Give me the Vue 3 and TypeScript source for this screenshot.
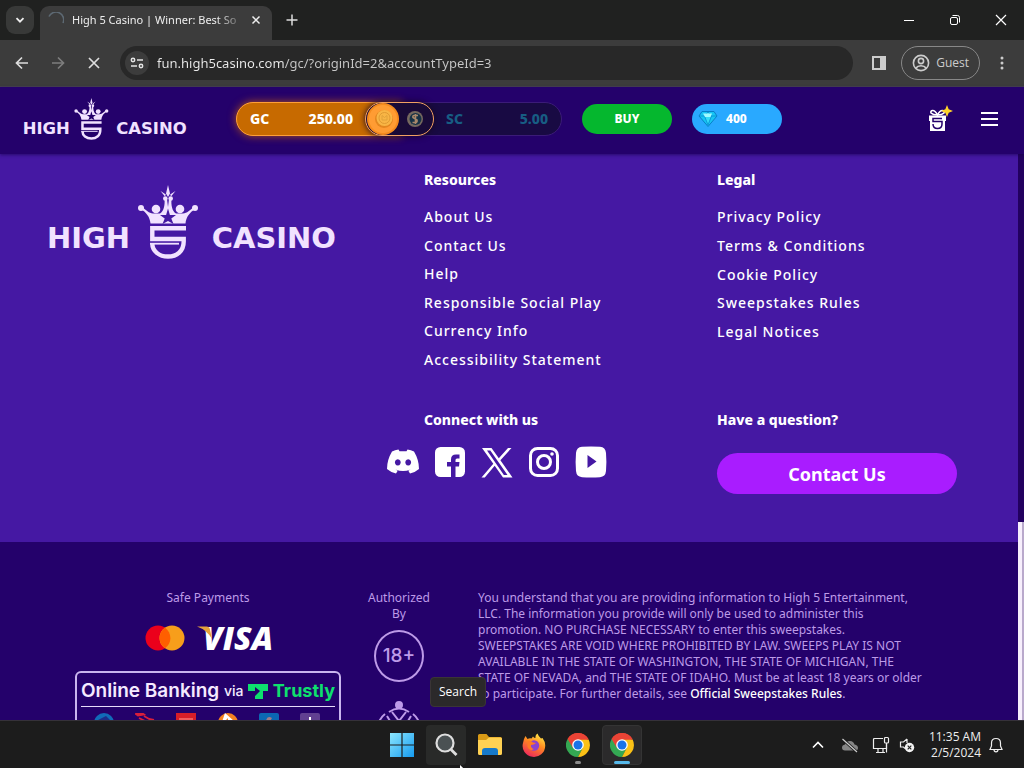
<script setup lang="ts">
import { ref } from 'vue'

interface FooterLink {
  label: string
  href: string
}

const resources: FooterLink[] = [
  { label: 'About Us', href: '#about' },
  { label: 'Contact Us', href: '#contact' },
  { label: 'Help', href: '#help' },
  { label: 'Responsible Social Play', href: '#responsible' },
  { label: 'Currency Info', href: '#currency' },
  { label: 'Accessibility Statement', href: '#accessibility' },
]

const legal: FooterLink[] = [
  { label: 'Privacy Policy', href: '#privacy' },
  { label: 'Terms & Conditions', href: '#terms' },
  { label: 'Cookie Policy', href: '#cookies' },
  { label: 'Sweepstakes Rules', href: '#rules' },
  { label: 'Legal Notices', href: '#notices' },
]

const address = ref('fun.high5casino.com/gc/?originId=2&accountTypeId=3')
</script>

<template>
  <div class="screen">
    <svg class="defs" aria-hidden="true">
      <symbol id="chrome-logo" viewBox="0 0 24 24">
        <path d="M12 12L1.600 6A12 12 0 0 1 22.400 6z" fill="#ea4335" />
        <path d="M12 12L1.600 6A12 12 0 0 0 12 24L17.500 14z" fill="#34a853" />
        <path d="M12 6.500H22.600A12 12 0 0 1 12 24L17 14.500z" fill="#fbc116" />
        <path d="M1.600 6L7 15L12 6.500H22.600L22.400 6A12 12 0 0 0 1.600 6z" fill="#ea4335" />
        <circle cx="12" cy="12" r="5.800" fill="#fff" />
        <circle cx="12" cy="12" r="4.500" fill="#1a73e8" />
      </symbol>
    </svg>

    <div class="tabstrip">
      <button class="tab-search" aria-label="Search tabs">
        <svg width="10" height="10" viewBox="0 0 10 10"><path d="M1.500 3.200L5 6.700L8.500 3.200" fill="none" stroke="#eee" stroke-width="1.800" /></svg>
      </button>
      <div class="tab">
        <svg class="spinner" width="16" height="16" viewBox="0 0 16 16"><path d="M1 4.500A7.500 7.500 0 0 1 15 11" fill="none" stroke="#5d6973" stroke-width="1.600" /></svg>
        <span class="tab-title">High 5 Casino | Winner: Best So</span>
        <button class="plain" aria-label="Close tab">
          <svg width="10" height="10" viewBox="0 0 10 10"><path d="M1.500 1.500L8.500 8.500M8.500 1.500L1.500 8.500" stroke="#eee" stroke-width="1.500" /></svg>
        </button>
      </div>
      <button class="plain new-tab" aria-label="New tab">
        <svg width="12" height="12" viewBox="0 0 12 12"><path d="M6 .5V11.500M.5 6H11.500" stroke="#ddd" stroke-width="1.500" /></svg>
      </button>
      <div class="window-buttons">
        <button class="plain" aria-label="Minimize"><svg width="12" height="12" viewBox="0 0 12 12"><path d="M1 6.500H11" stroke="#fff" /></svg></button>
        <button class="plain" aria-label="Restore"><svg width="12" height="12" viewBox="0 0 12 12" fill="none" stroke="#fff"><rect x="1.500" y="3.500" width="7" height="7" rx="1.500" /><path d="M3.500 1.500H8.500Q10.500 1.500 10.500 3.500V8.500" /></svg></button>
        <button class="plain" aria-label="Close"><svg width="12" height="12" viewBox="0 0 12 12"><path d="M1 1L11 11M11 1L1 11" stroke="#fff" stroke-width="1.200" /></svg></button>
      </div>
    </div>

    <div class="toolbar">
      <button class="plain" aria-label="Back"><svg width="14" height="14" viewBox="0 0 14 14"><path d="M13 7H2M7 1.500L1.500 7L7 12.500" fill="none" stroke="#ddd" stroke-width="1.700" /></svg></button>
      <button class="plain" aria-label="Forward"><svg width="14" height="14" viewBox="0 0 14 14"><path d="M1 7H12M7 1.500L12.500 7L7 12.500" fill="none" stroke="#7d7d7d" stroke-width="1.700" /></svg></button>
      <button class="plain" aria-label="Stop loading"><svg width="12" height="12" viewBox="0 0 12 12"><path d="M1 1L11 11M11 1L1 11" stroke="#ddd" stroke-width="1.700" /></svg></button>
      <div class="omnibox">
        <button class="site-info" aria-label="Site information">
          <svg width="14" height="12" viewBox="0 0 14 12" fill="none" stroke="#e4e4e4" stroke-width="1.500"><circle cx="3" cy="3" r="1.700" /><path d="M7 3H13M1 9H7" /><circle cx="11" cy="9" r="1.700" /></svg>
        </button>
        <input v-model="address" class="address" type="text" aria-label="Address" spellcheck="false" />
      </div>
      <button class="plain side-panel" aria-label="Side panel">
        <svg width="16" height="16" viewBox="0 0 16 16"><path fill-rule="evenodd" d="M1 1H15V15H1zM3 3V13H9V3z" fill="#ccc" /></svg>
      </button>
      <button class="guest">
        <svg width="18" height="18" viewBox="0 0 18 18" fill="none" stroke="#ccc" stroke-width="1.600"><circle cx="9" cy="9" r="7.600" /><circle cx="9" cy="7" r="2.600" /><path d="M4 14C6 11 12 11 14 14" /></svg>
        <span>Guest</span>
      </button>
      <button class="plain" aria-label="Menu"><svg width="4" height="16" viewBox="0 0 4 16" fill="#ccc"><circle cx="2" cy="3" r="1.500" /><circle cx="2" cy="8" r="1.500" /><circle cx="2" cy="13" r="1.500" /></svg></button>
    </div>

    <main class="page">
      <header class="site-header">
        <a class="header-logo" href="#home" aria-label="High 5 Casino"><svg width="164" height="42" viewBox="0 0 288 74"><use href="#h5-logo" /></svg></a>
        <div class="balances">
          <div class="balance gold"><span>GC</span><span>250.00</span></div>
          <button class="coin-switch" aria-label="Switch currency">
            <svg width="34" height="32" viewBox="0 0 34 32">
              <circle cx="17" cy="16" r="16" fill="#f58b1e" />
              <circle cx="17" cy="16" r="14" fill="#ff9c33" />
              <circle cx="18" cy="16" r="9" fill="#e3861f" />
              <circle cx="18.500" cy="15" r="8" fill="#f8b545" />
              <circle cx="18.500" cy="15" r="5.500" fill="none" stroke="#df9a32" />
              <path d="M16 17V12.500L18.500 14.500L21 12.500V17z" fill="none" stroke="#e0a23a" />
            </svg>
            <svg width="18" height="18" viewBox="0 0 18 18">
              <circle cx="9" cy="9" r="8" fill="#76695f" /><circle cx="9.500" cy="9" r="6" fill="#173246" />
              <path d="M12 5.500H8Q6.500 5.500 7 7.500L11 10Q11.500 12.500 9.500 12.500H6.500M9.500 4V14" fill="none" stroke="#a9886b" stroke-width="1.600" />
            </svg>
          </button>
          <div class="balance sweep"><span>SC</span><span>5.00</span></div>
        </div>
        <button class="pill buy">BUY</button>
        <button class="pill gems">
          <svg width="20" height="18" viewBox="0 0 20 18"><path d="M4 1.500H16L19 6L10 16.500L1 6z" fill="#16c5f4" stroke="#087fc8" /><path d="M2 6H18M6.500 6L10 15L13.500 6L10 2z" fill="#35dcf8" stroke="#078bd0" stroke-width=".8" /><path d="M5 3.500H14L12.500 7H7z" fill="#a0fbff" /></svg>
          <span>400</span>
        </button>
        <div class="header-actions">
          <button class="plain" aria-label="Rewards">
            <svg width="26" height="28" viewBox="0 0 26 28">
              <path d="M2 10.500H19V16H18V26H3V16H2z" fill="#fff" />
              <path d="M10.500 10C7 3 3 5.500 4 8Q6 10 10.500 10Q15 10 17 8C18 5.500 14 3 10.500 10z" fill="none" stroke="#fff" stroke-width="1.600" />
              <path d="M15 13.500H6V16.500H15V19Q15 23.500 10.500 23.500T6 19" fill="none" stroke="#24016b" stroke-width="1.500" />
              <path d="M20 0L21.700 4.300L26 6L21.700 7.700L20 12L18.300 7.700L14 6L18.300 4.300z" fill="#ffd42a" />
            </svg>
          </button>
          <button class="plain" aria-label="Open menu"><svg width="18" height="16" viewBox="0 0 18 16"><path d="M0 2H17M0 8H17M0 14H17" stroke="#fff" stroke-width="2" /></svg></button>
        </div>
      </header>

      <div class="scroller">
        <footer class="site-footer">
          <section class="footer-top">
            <a class="footer-logo" href="#home" aria-label="High 5 Casino">
              <svg width="288" height="74" viewBox="0 0 288 74">
                <g id="h5-logo">
                  <text class="wordmark" x="-1" y="63">HIGH</text>
                  <text class="wordmark" x="288" y="63" text-anchor="end">CASINO</text>
                  <path d="M138 43.2H104.3V54H135.7V56.5C135.7 66 129 71.5 120 71.5S104.3 66 104.3 58.6" fill="none" stroke="currentColor" stroke-width="4.4" />
                  <path d="M102 57.800H131V59.600H102z" fill="currentColor" />
                  <path d="M102.5 38.5C102 32 98 27 92.5 24L94 21.800C98 25 101 28.500 105 28.500L112 28.500C116 26 117 20 116.500 14H119L120 22L121 14H123.500C123 20 124 26 128 28.500L135 28.500C139 28.500 142 25 146 21.800L147.500 24C142 27 138 32 137.500 38.500z" fill="currentColor" />
                  <g fill="currentColor">
                    <circle cx="93" cy="23" r="3" />
                    <circle cx="147" cy="23" r="3" />
                    <circle cx="108" cy="24" r="4.300" />
                    <circle cx="132" cy="24" r="4.300" />
                    <circle cx="117.300" cy="13.500" r="2.300" />
                    <circle cx="122.700" cy="13.500" r="2.300" />
                    <path d="M120 0L122 8.500L120 12L118 8.500zM112.500 6L117.800 9.500L117 11.500zM127.500 6L122.200 9.500L123 11.500z" />
                  </g>
                  <path class="star" d="M120 23.500L121.900 30H128L123.300 33.500L125.500 39L120 36L114.500 39L116.700 33.500L112 30H118.100z" />
                </g>
              </svg>
            </a>
            <nav>
              <h2>Resources</h2>
              <ul class="links">
                <li v-for="link in resources" :key="link.label"><a :href="link.href">{{ link.label }}</a></li>
              </ul>
            </nav>
            <nav>
              <h2>Legal</h2>
              <ul class="links short">
                <li v-for="link in legal" :key="link.label"><a :href="link.href">{{ link.label }}</a></li>
              </ul>
            </nav>
            <div class="connect">
              <h2>Connect with us</h2>
              <div class="social">
                <a href="#discord" aria-label="Discord"><svg width="32" height="32" viewBox="0 0 32 32"><path fill-rule="evenodd" d="M11.500 3.500L12.500 5.300H19.500L20.500 3.500Q24 4 27 5.600Q32 14 32 23Q28 26.500 23 27.500L21.300 24.800L23.500 23.500Q16 26.500 8.500 23.500L10.700 24.800L9 27.500Q4 26.500 0 23Q0 14 5 5.600Q8 4 11.500 3.500zM10.800 13.300A2.900 3.100 0 1 0 10.810 13.300zM21.200 13.300A2.900 3.100 0 1 0 21.210 13.300z" fill="#fff" /></svg></a>
                <a href="#facebook" aria-label="Facebook"><svg width="32" height="32" viewBox="0 0 32 32"><rect x="1" y="1" width="30" height="30" rx="5.500" fill="#fff" /><path d="M17 31.500V20.500H13V16H17V13.500Q17 8.500 22 8.500H25.500V12.500H23Q21.500 12.500 21.500 14V16H25.500L25 20.500H21.500V31.500z" fill="#4518a3" /></svg></a>
                <a href="#x" aria-label="X"><svg width="32" height="32" viewBox="0 0 32 32"><path fill-rule="evenodd" d="M1 2H10.500L17.800 12.200L27 2H30.500L19.400 14.200L31.500 31.500H22L13.700 19.800L3.800 31.500H.5L12.300 17.800zM6 4.500L22.900 29H26.500L9.300 4.500z" fill="#fff" /></svg></a>
                <a href="#instagram" aria-label="Instagram"><svg width="32" height="32" viewBox="0 0 32 32" fill="none" stroke="#fff" stroke-width="3"><rect x="2.500" y="2.500" width="27" height="27" rx="7" /><circle cx="16" cy="16" r="6.500" /><circle cx="24" cy="8" r="1.800" fill="#fff" stroke="none" /></svg></a>
                <a href="#youtube" aria-label="YouTube"><svg width="32" height="32" viewBox="0 0 32 32"><path d="M7 .8Q16 0 25 .8Q30.500 1.300 31 7Q31.800 16 31 25Q30.500 30.700 25 31.200Q16 32 7 31.200Q1.500 30.700 1 25Q.2 16 1 7Q1.500 1.300 7 .8z" fill="#fff" /><path d="M12.500 9L21.500 15.500L12.500 22z" fill="#4518a3" /></svg></a>
              </div>
            </div>
            <div class="question">
              <h2>Have a question?</h2>
              <button class="contact">Contact Us</button>
            </div>
          </section>

          <section class="footer-bottom">
            <div class="payments">
              <p>Safe Payments</p>
              <div class="cards">
                <svg width="40" height="26" viewBox="0 0 40 26" role="img" aria-label="Mastercard"><circle cx="13" cy="13" r="12.500" fill="#eb001b" /><circle cx="27" cy="13" r="12.500" fill="#f79e1b" /><path d="M20 2.700A12.500 12.500 0 0 1 20 23.300A12.500 12.500 0 0 1 20 2.700z" fill="#ff5f00" /></svg>
                <svg width="76" height="26" viewBox="0 0 76 26" role="img" aria-label="Visa"><text class="visa" x="6" y="25">VISA</text><path d="M0 1.500H9.500Q12.500 1.500 13 4.500L15 14Q10 5 0 1.500z" fill="#e6a23c" /></svg>
              </div>
              <div class="banking">
                <div class="banking-title">
                  <span class="bank-name">Online Banking</span>
                  <span class="via">via</span>
                  <svg width="20" height="15" viewBox="0 0 20 15"><path d="M0 0H20V7H15V15H7V12L12 7L7 3V7H0z" fill="#0ee06e" /></svg>
                  <span class="trustly">Trustly</span>
                </div>
                <div class="banks">
                  <svg width="20" height="20" viewBox="0 0 20 20"><circle cx="10" cy="10" r="10" fill="#116bb8" /><path d="M4 7L12 3L18 9H7V13H3z" fill="#24016b" opacity=".6" /></svg>
                  <svg width="20" height="20" viewBox="0 0 20 20"><path d="M1 1L7 0L9 1.500L3 2.500zM9 3L14 6L19 7M4 5L10 8" fill="none" stroke="#d91f3b" stroke-width="1.800" /></svg>
                  <svg width="20" height="20" viewBox="0 0 20 20"><rect width="20" height="20" fill="#d71e28" /><path d="M3 6H17" stroke="#f05b5b" stroke-width="2" /></svg>
                  <svg width="20" height="20" viewBox="0 0 20 20"><circle cx="10" cy="10" r="10" fill="#f58220" /><path d="M7 0L16 8L10 12L10 5L3 12z" fill="#fff" /></svg>
                  <svg width="20" height="20" viewBox="0 0 20 20"><rect width="20" height="20" rx="2" fill="#0b68b3" /><path d="M7 8Q8 2 13 5L10 10z" fill="#9f7c87" /></svg>
                  <svg width="20" height="20" viewBox="0 0 20 20"><rect width="20" height="20" rx="2" fill="#614091" /><path d="M10 4V16M4 10H16" stroke="#fff" stroke-width="2" /></svg>
                </div>
              </div>
            </div>
            <div class="authorized">
              <p>Authorized By</p>
              <div class="age">18+</div>
              <svg width="50" height="50" viewBox="0 0 50 50" fill="none" stroke="#bd9be8" stroke-width="2"><circle cx="25" cy="4" r="3" fill="#bd9be8" /><path d="M15 11Q25 4 35 11M18 11L25 20L32 11M25 20V30M11 13Q7 16 5 21M39 13Q43 16 45 21M13 15L16 20M37 15L34 20" /></svg>
            </div>
            <p class="disclaimer">
              You understand that you are providing information to High 5 Entertainment, LLC. The information you provide will only be used to administer this promotion. NO PURCHASE NECESSARY to enter this sweepstakes. SWEEPSTAKES ARE VOID WHERE PROHIBITED BY LAW. SWEEPS PLAY IS NOT AVAILABLE IN THE STATE OF WASHINGTON, THE STATE OF MICHIGAN, THE STATE OF NEVADA, and THE STATE OF IDAHO. Must be at least 18 years or older to participate. For further details, see <a href="#official">Official Sweepstakes Rules</a>.
            </p>
          </section>
        </footer>
        <div class="scrollbar"><div class="thumb"></div></div>
      </div>
    </main>

    <div class="taskbar">
      <div class="apps">
        <button class="app" aria-label="Start">
          <svg width="24" height="24" viewBox="0 0 24 24"><defs><linearGradient id="win" x2="1" y2="1"><stop stop-color="#8ce6fd" /><stop offset="1" stop-color="#159bf0" /></linearGradient></defs><path d="M0 0H11.400V11.400H0zM12.600 0H24V11.400H12.600zM0 12.600H11.400V24H0zM12.600 12.600H24V24H12.600z" fill="url(#win)" /></svg>
        </button>
        <button class="app hover" aria-label="Search">
          <svg width="24" height="24" viewBox="0 0 24 24"><circle cx="11" cy="10" r="8.500" fill="#4a5153" stroke="#dedede" stroke-width="2.200" /><path d="M17 16.500L22.500 22" stroke="#dedede" stroke-width="2.800" /></svg>
          <span class="tooltip">Search</span>
          <svg class="pointer" width="12" height="18" viewBox="0 0 12 18"><path d="M0 0V16L4 12.500L6.500 18L9 17L6.500 11.500H12z" fill="#fff" /></svg>
        </button>
        <button class="app" aria-label="File Explorer">
          <svg width="24" height="24" viewBox="0 0 24 24"><path d="M0 2.500Q0 1 1.500 1H8.500L11 4H22.500Q24 4 24 5.500V10H0z" fill="#d99a16" /><path d="M0 7H8L11 4.500H22.500Q24 4.500 24 6V20.500Q24 22 22.500 22H1.500Q0 22 0 20.500z" fill="#ffd153" /><path d="M4 22V18Q4 15 7 15H17Q20 15 20 18V22z" fill="#1679ca" /></svg>
        </button>
        <button class="app" aria-label="Firefox">
          <svg width="24" height="24" viewBox="0 0 24 24"><defs><linearGradient id="fox" x1=".8" x2=".3" y2="1"><stop stop-color="#fff14a" /><stop offset=".45" stop-color="#ff8a20" /><stop offset="1" stop-color="#ee265e" /></linearGradient></defs><path d="M3.500 3L5.500 6Q7.500 5 9.500 5.500L11 3.500Q12 5 13.500 5Q13 2 15.500 .5Q16.500 3.500 19 5.500L20.500 5Q23.500 9 23.200 13A11.300 11 0 1 1 1 10Q1.500 6 3.500 3z" fill="url(#fox)" /><circle cx="12" cy="12.500" r="5.200" fill="#8a42cf" /><path d="M5.500 8Q9 7 11 9.500L14 10Q12 12 9 12Q8.500 15 12 16Q8 19 5.500 14z" fill="#ff7a25" /></svg>
        </button>
        <button class="app running" aria-label="Google Chrome"><svg width="24" height="24"><use href="#chrome-logo" /></svg></button>
        <button class="app current" aria-label="Google Chrome, active"><svg width="24" height="24"><use href="#chrome-logo" /></svg></button>
      </div>
      <div class="tray">
        <button class="plain" aria-label="Show hidden icons"><svg width="12" height="8" viewBox="0 0 12 8"><path d="M1 6.500L6 1.500L11 6.500" fill="none" stroke="#fff" stroke-width="1.600" /></svg></button>
        <svg class="cloud" width="18" height="16" viewBox="0 0 18 16"><path d="M4 13.500Q1 13.500 1 10.500Q1 8 4 7.500Q5 4 9 4Q12.500 4 13.500 7.500Q17 8 17 11Q17 13.500 14 13.500z" fill="#858585" /><path d="M1.500 2L16 15" stroke="#1c1c1c" stroke-width="3" /><path d="M1.500 2L16 15" stroke="#ccc" stroke-width="1.200" /></svg>
        <svg class="network" width="18" height="18" viewBox="0 0 18 18" fill="none" stroke="#eee" stroke-width="1.200"><path d="M11 2.500H2.500Q1.500 2.500 1.500 3.500V12.500H14.500V8M6 12.500V16M11 12.500V16M4 16.500H13" /><rect x="12.500" y="1.500" width="4" height="5.500" rx="1" /><path d="M14.500 7V16.500" /></svg>
        <svg class="sound" width="16" height="16" viewBox="0 0 16 16"><path d="M8 2L4.500 5H1.500V10H4.500L6 11.500M8 2V6" fill="none" stroke="#eee" stroke-width="1.200" /><circle cx="10.500" cy="10.500" r="4.700" fill="#f3f3f3" /><path d="M8.700 8.700L12.300 12.300M12.300 8.700L8.700 12.300" stroke="#222" stroke-width="1.200" /></svg>
        <div class="clock"><span>11:35 AM</span><span>2/5/2024</span></div>
        <button class="plain" aria-label="Notifications"><svg width="14" height="16" viewBox="0 0 14 16"><path d="M1 12.500L2.500 9V6Q2.500 1.500 7 1.500T11.500 6V9L13 12.500zM5 12.500Q5 14.800 7 14.800T9 12.500" fill="none" stroke="#eee" stroke-width="1.200" /></svg></button>
      </div>
    </div>
  </div>
</template>

<style>
html,
body {
  margin: 0;
  background: #24016b;
}
</style>

<style scoped>
* { box-sizing: border-box; }
.screen {
  display: flex;
  flex-direction: column;
  height: 100vh;
  overflow: hidden;
  font-family: "Noto Sans", "Open Sans", sans-serif;
  color: #fff;
}
.defs { position: absolute; width: 0; height: 0; }
.wordmark { font: 700 29px "DejaVu Sans", sans-serif; fill: currentColor; }
.star { fill: var(--star, #4518a3); }
.header-logo { --star: #24016b; }
button { font-family: inherit; color: inherit; padding: 0; border: 0; cursor: pointer; }
.plain { display: flex; align-items: center; justify-content: center; background: none; }
svg { display: block; flex: none; }
a { color: inherit; text-decoration: none; }
h2, p, ul { margin: 0; padding: 0; }

.tabstrip { display: flex; align-items: center; height: 40px; padding-left: 6px; background: #202120; flex: none; }
.tab-search { display: flex; align-items: center; justify-content: center; width: 28px; height: 28px; border-radius: 9px; background: #383938; }
.tab { display: flex; align-items: center; align-self: flex-end; width: 232px; height: 34px; margin-left: 6px; padding: 0 11px 6px 8px; border-radius: 9px 9px 0 0; background: #3c3c3c; }
.tab-title { flex: 1; min-width: 0; margin: 0 8px 0 8px; white-space: nowrap; font: 11px/18px "Noto Sans", sans-serif; color: #eee; mask-image: linear-gradient(to right, #000 144px, transparent 174px); }
.new-tab { width: 40px; height: 40px; }
.window-buttons { display: flex; margin-left: auto; }
.window-buttons .plain { width: 46px; height: 40px; }

.toolbar { display: flex; align-items: center; height: 47px; padding: 0 12px 0 4px; background: #3c3c3c; border-bottom: 1px solid #47434f; flex: none; }
.toolbar > .plain { width: 36px; height: 36px; }
.toolbar > .plain:last-child { width: 20px; margin-left: 12px; }
.omnibox { display: flex; align-items: center; flex: 1; height: 34px; margin-left: 8px; padding: 0 16px 0 5px; border-radius: 17px; background: #282828; }
.site-info { display: flex; align-items: center; justify-content: center; width: 24px; height: 24px; border-radius: 12px; background: #3c3c3c; }
.address { flex: 1; min-width: 0; margin-left: 8px; padding: 0; border: 0; outline: 0; font: 13px/20px "Noto Sans", sans-serif; color: transparent; background: linear-gradient(to right, #ececec 127px, #c8c8c8 127px); background-clip: text; }
.side-panel { margin-left: 8px; }
.guest { display: flex; align-items: center; gap: 6px; height: 34px; margin-left: 4px; padding: 0 10px; border: 1px solid #888; border-radius: 17px; background: none; font: 12px/18px "Open Sans", sans-serif; color: #ccc; }

.page { display: flex; flex-direction: column; flex: 1; min-height: 0; background: #4518a3; }
.site-header { display: flex; align-items: center; height: 67px; padding: 0 25px 4px 23px; background: #24016b; color: #fff; box-shadow: 0 1px 3px rgba(20, 0, 70, .6); z-index: 1; flex: none; }
.header-logo, .footer-logo { color: #f1e2ff; }
.balances { position: relative; display: flex; width: 326px; height: 34px; margin-left: 49px; border: 1px solid #3b1b78; border-radius: 17px; background: #180a43; font-weight: 800; font-size: 14px; line-height: 32px; }
.balance { display: flex; justify-content: space-between; }
.gold { width: 166px; margin: -1px; padding: 0 48px 0 13px; border: 1px solid #ff9f38; border-radius: 17px 0 0 17px; background: #c76a00; box-shadow: 0 0 8px #a8501d; }
.coin-switch { position: absolute; left: 128px; top: -1px; display: flex; align-items: center; gap: 6px; width: 69px; height: 34px; border: 1px solid #f1a062; border-radius: 17px; background: #190a37; box-shadow: 0 0 6px #160721; }
.sweep { flex: 1; padding: 0 13px 0 45px; color: #175d83; }
.pill { width: 90px; height: 30px; border-radius: 15px; font-size: 12px; line-height: 18px; font-weight: 800; }
.buy { margin-left: 20px; background: #05b72e; }
.gems { display: flex; align-items: center; gap: 8px; margin-left: 20px; padding-left: 6px; background: #29a9ff; }
.header-actions { display: flex; align-items: center; gap: 28px; margin-left: auto; }

.scroller { display: flex; flex: 1; min-height: 0; overflow: hidden; }
.site-footer { flex: 1; min-width: 0; background: #24016b; }
.scrollbar { display: flex; flex-direction: column; justify-content: flex-end; width: 6px; background: #22005f; }
.thumb { height: 35%; border-right: 2px solid #b9a9cc; background: #f7effc; }
.footer-top { display: grid; grid-template-columns: 376fr 293fr 240fr; padding: 16px 61px 48px 48px; background: #4518a3; }
.footer-logo { grid-row: 1 / 3; padding-top: 15px; }
h2 { font-size: 14px; line-height: 20px; font-weight: 800; }
.links { display: flex; flex-direction: column; justify-content: space-between; height: 165px; margin-top: 16px; list-style: none; font-size: 14px; line-height: 22px; font-weight: 500; letter-spacing: 1px; }
.links.short { height: 137px; }
.connect, .question { margin-top: 39px; }
.social { display: flex; gap: 15px; margin: 16px 0 0 -37px; }
.contact { width: 100%; height: 41px; margin-top: 23px; border-radius: 21px; background: #a91cff; font-size: 18px; line-height: 24px; font-weight: 700; }

.footer-bottom { display: flex; align-items: flex-start; padding: 48px 94px 0 75px; font-size: 12px; line-height: 16px; color: #bd9be8; }
.payments { width: 266px; text-align: center; }
.cards { display: flex; gap: 12px; margin: 19px 0 0 70px; }
.visa { font: italic 800 32px "Open Sans", sans-serif; fill: #fff; }
.banking { height: 100px; margin-top: 20px; padding: 3px 4px; border: 2px solid #c9b5ee; border-radius: 6px; }
.banking-title { display: flex; align-items: center; justify-content: space-between; height: 31px; border-bottom: 1px solid #e6dafa; color: #f5eaff; white-space: nowrap; }
.bank-name { font: 600 19px/28px Inter, sans-serif; }
.via { font: 500 14px/28px Inter, sans-serif; }
.trustly { font: 700 18px/28px Inter, sans-serif; color: #0ee06e; }
.banks { display: flex; justify-content: space-between; padding: 6px 15px 0 13px; }
.authorized { display: flex; flex-direction: column; align-items: center; width: 70px; margin-left: 23px; text-align: center; }
.age { display: flex; align-items: center; justify-content: center; width: 50px; height: 52px; margin: 8px 0 19px; border: 2px solid #bd9be8; border-radius: 50%; font: 500 19px/24px Inter, sans-serif; }
.disclaimer { flex: 1; max-width: 450px; margin-left: 44px; }
.disclaimer a { color: #fff; font-weight: 500; }

.taskbar { display: grid; grid-template-columns: 1fr auto 1fr; align-items: center; height: 48px; background: #1c1c1c; border-top: 1px solid #353139; z-index: 2; flex: none; }
.apps { display: flex; gap: 4px; grid-column: 2; }
.app { position: relative; display: flex; align-items: center; justify-content: center; width: 40px; height: 40px; border: 1px solid transparent; border-radius: 4px; background: none; }
.hover { background: #292a29; }
.current { border-color: #343434; background: #2b2a2b; }
.running::after, .current::after { content: ""; position: absolute; bottom: 0; width: 6px; height: 3px; border-radius: 2px; background: #8c8c8c; }
.current::after { width: 16px; background: #56b9ea; }
.tooltip { position: absolute; left: 3px; bottom: 57px; padding: 5px 8px; border: 1px solid #3a3536; border-radius: 4px; background: #2b292a; font: 12px/18px "Open Sans", sans-serif; color: #fff; }
.pointer { position: absolute; left: 33px; top: 39px; }
.tray { display: flex; align-items: center; justify-content: flex-end; padding-right: 21px; }
.cloud { margin-left: 17px; }
.network { margin-left: 13px; }
.sound { margin-left: 9px; }
.clock { display: flex; flex-direction: column; align-items: flex-end; margin: 0 8px 0 14px; font: 12px/16px "Open Sans", sans-serif; color: #eee; white-space: nowrap; }
</style>
